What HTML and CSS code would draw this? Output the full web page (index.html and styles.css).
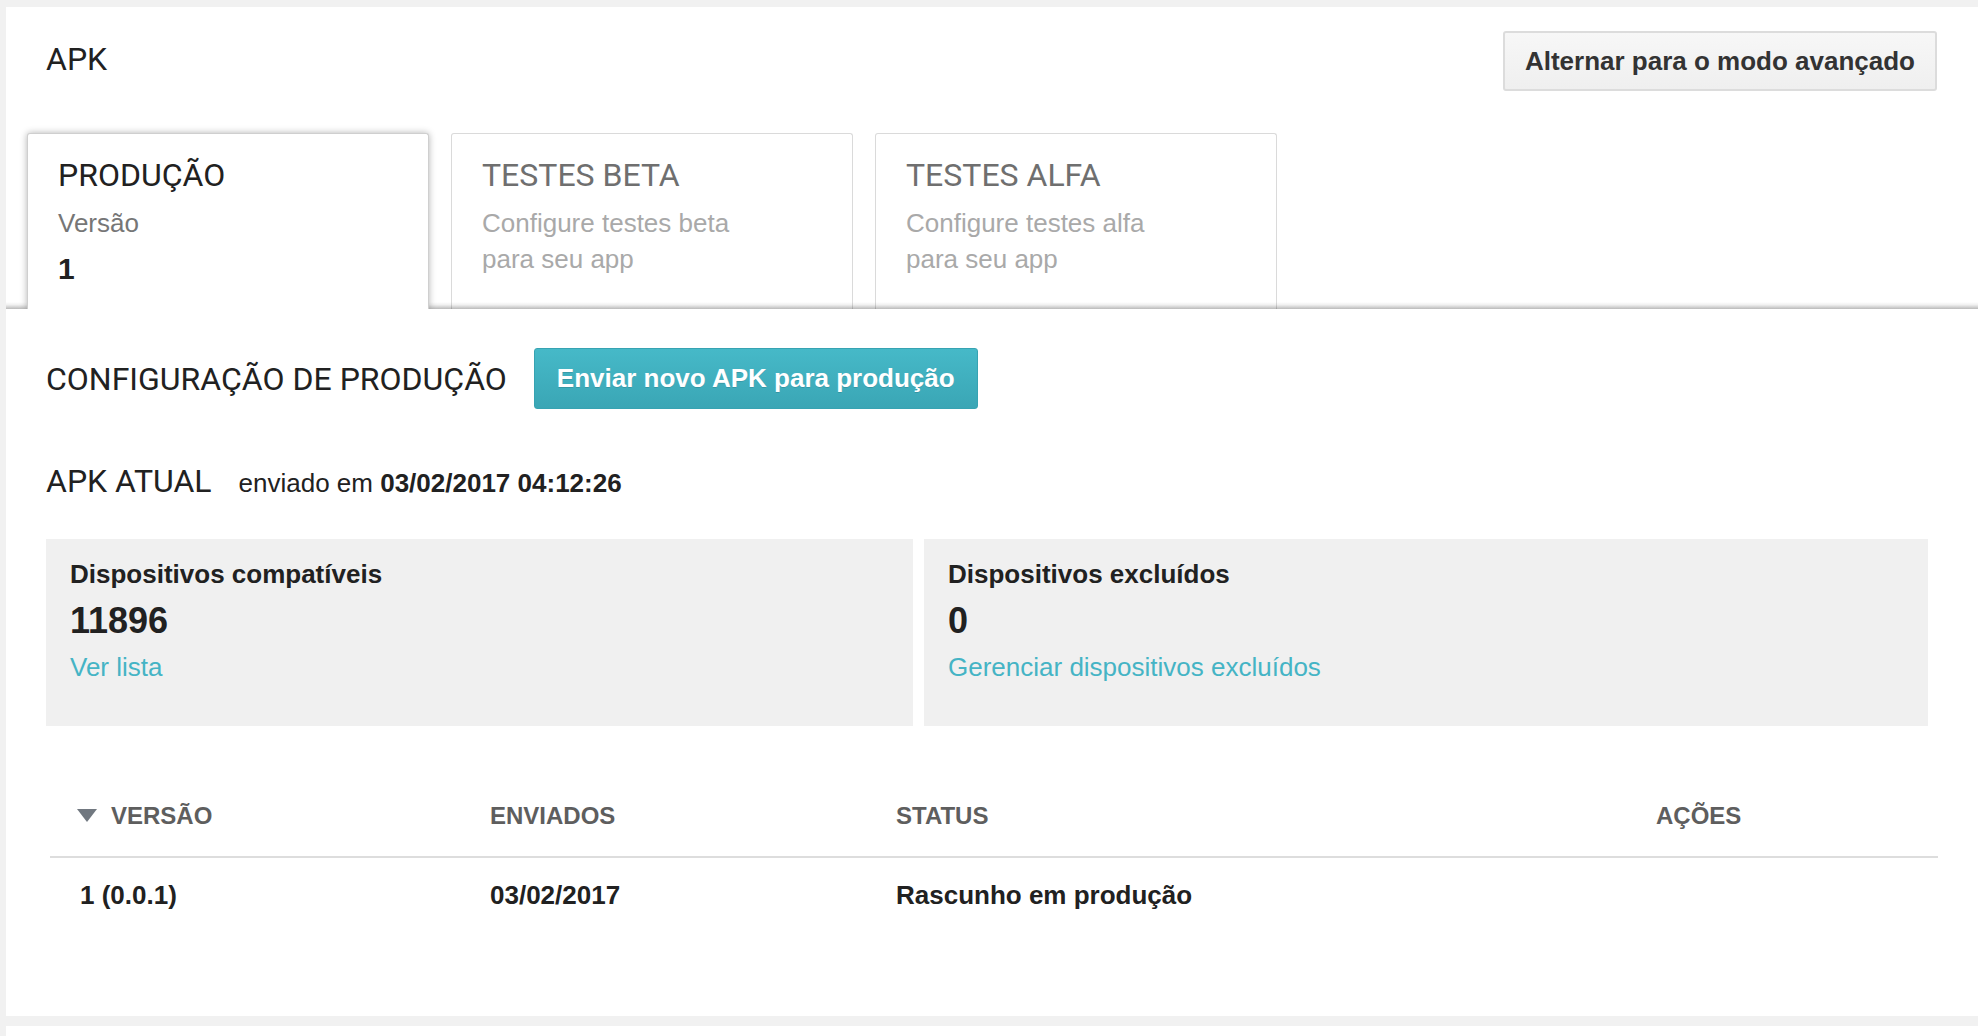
FILE: index.html
```html
<!DOCTYPE html>
<html lang="pt-BR">
<head>
<meta charset="utf-8">
<title>APK</title>
<link rel="stylesheet" href="styles.css">
</head>
<body>
<div class="panel">
  <div class="page-header">
    <h1 class="page-title">APK</h1>
    <button class="btn btn-default">Alternar para o modo avançado</button>
  </div>

  <div class="tabs">
    <div class="tab tab-active">
      <div class="tab-title">PRODUÇÃO</div>
      <div class="tab-sub">Versão</div>
      <div class="tab-value">1</div>
    </div>
    <div class="tab">
      <div class="tab-title">TESTES BETA</div>
      <div class="tab-sub tab-sub-muted">Configure testes beta<br>para seu app</div>
    </div>
    <div class="tab">
      <div class="tab-title">TESTES ALFA</div>
      <div class="tab-sub tab-sub-muted">Configure testes alfa<br>para seu app</div>
    </div>
  </div>

  <div class="content">
    <div class="config-row">
      <h2 class="section-title">CONFIGURAÇÃO DE PRODUÇÃO</h2>
      <button class="btn btn-primary">Enviar novo APK para produção</button>
    </div>

    <div class="current-row">
      <h2 class="section-title">APK ATUAL</h2>
      <span class="current-meta">enviado em <b>03/02/2017 04:12:26</b></span>
    </div>

    <div class="cards">
      <div class="card">
        <div class="card-label">Dispositivos compatíveis</div>
        <div class="card-number">11896</div>
        <a class="card-link" href="#">Ver lista</a>
      </div>
      <div class="card">
        <div class="card-label">Dispositivos excluídos</div>
        <div class="card-number">0</div>
        <a class="card-link" href="#">Gerenciar dispositivos excluídos</a>
      </div>
    </div>

    <div class="table">
      <div class="th th-first"><span class="sort-arrow"></span>VERSÃO</div>
      <div class="th">ENVIADOS</div>
      <div class="th">STATUS</div>
      <div class="th">AÇÕES</div>
      <div class="td td-first">1 (0.0.1)</div>
      <div class="td">03/02/2017</div>
      <div class="td">Rascunho em produção</div>
      <div class="td"></div>
    </div>
  </div>
</div>
<div class="panel panel-next"></div>
</body>
</html>
```

FILE: styles.css
```css
* { box-sizing: border-box; }

html, body { margin: 0; }

body {
  background: #f1f1f1;
  padding: 7px 0 0 6px;
  font-family: "Liberation Sans", Arial, sans-serif;
  color: #212121;
  overflow: hidden;
}

.panel {
  background: #fff;
  padding-bottom: 82px;
}

.panel-next {
  margin-top: 10px;
  height: 10px;
  padding: 0;
}

/* header */
.page-header {
  display: flex;
  justify-content: space-between;
  align-items: flex-start;
  padding: 24px 41px 0 40px;
}

.page-title,
.section-title {
  margin: 0;
  font-family: Roboto, "Liberation Sans", sans-serif;
  font-weight: 400;
  font-size: 32px;
  line-height: 38px;
  color: #212121;
}

.page-title { margin-top: 9px; }

.btn {
  font-family: "Liberation Sans", Arial, sans-serif;
  font-weight: 700;
  font-size: 26px;
  border-radius: 3px;
  cursor: pointer;
  margin: 0;
}

.btn-default {
  height: 60px;
  padding: 0 20px;
  color: #333;
  background: linear-gradient(#f7f7f7, #efefef);
  border: 2px solid #dcdcdc;
}

.btn-primary {
  height: 61px;
  padding: 0 22px;
  color: #fff;
  background: linear-gradient(#46b9c8, #3aa6b5);
  border: 1px solid #37a3b2;
  text-shadow: 0 1px 0 rgba(0, 0, 0, 0.12);
}

/* tabs */
.tabs {
  position: relative;
  display: flex;
  gap: 22px;
  margin-top: 32px;
  padding: 10px 0 0 21px;
  overflow: hidden;
}

.tabs::after {
  content: "";
  position: absolute;
  left: 0;
  right: 0;
  bottom: 0;
  height: 7px;
  background: linear-gradient(rgba(0, 0, 0, 0), rgba(0, 0, 0, 0.06) 40%, rgba(0, 0, 0, 0.27));
  z-index: 1;
}

.tab {
  position: relative;
  width: 402px;
  height: 176px;
  padding: 22px 30px 0 30px;
  background: #fff;
  border: 1px solid #dadada;
  border-bottom: none;
  border-radius: 3px 3px 0 0;
}

.tab-active {
  z-index: 2;
  border-color: #cfcfcf;
  box-shadow: 0 0 7px rgba(0, 0, 0, 0.3);
}

.tab-title {
  font-family: Roboto, "Liberation Sans", sans-serif;
  font-size: 32px;
  line-height: 38px;
  color: #6f6f6f;
}

.tab-active .tab-title { color: #212121; }

.tab-sub {
  margin-top: 11px;
  font-size: 26px;
  line-height: 36px;
  color: #767676;
}

.tab-sub-muted { color: #a9a9a9; }

.tab-value {
  margin-top: 10px;
  font-size: 30px;
  line-height: 36px;
  font-weight: 700;
  color: #212121;
}

/* content */
.content {
  padding: 39px 40px 0 40px;
}

.config-row {
  display: flex;
  align-items: center;
  gap: 27px;
}

.current-row {
  display: flex;
  align-items: baseline;
  margin-top: 53px;
}

.current-meta {
  margin-left: 27px;
  font-size: 26px;
  color: #212121;
}

.current-meta b { font-weight: 700; }

.cards {
  display: grid;
  grid-template-columns: 867fr 1004fr;
  gap: 11px;
  margin: 39px 10px 0 0;
}

.card {
  background: #f0f0f0;
  padding: 19px 24px 43px 24px;
}

.card-label {
  font-size: 26px;
  line-height: 32px;
  font-weight: 700;
  color: #212121;
}

.card-number {
  margin-top: 10px;
  font-size: 36px;
  line-height: 42px;
  font-weight: 700;
  color: #212121;
}

.card-link {
  display: block;
  margin-top: 9px;
  font-size: 26px;
  line-height: 32px;
  color: #45b4c5;
  text-decoration: none;
}

/* table */
.table {
  display: grid;
  grid-template-columns: 413px 406px 760px 1fr;
  margin: 52px 0 0 4px;
}

.th {
  display: flex;
  align-items: center;
  padding: 23px 0 25px 27px;
  font-size: 24px;
  line-height: 30px;
  font-weight: 700;
  color: #5e5e5e;
  border-bottom: 2px solid #dddddd;
}

.sort-arrow {
  width: 0;
  height: 0;
  margin-right: 14px;
  border-left: 10px solid transparent;
  border-right: 10px solid transparent;
  border-top: 13px solid #717880;
  position: relative;
  top: -1px;
}

.td {
  padding: 22px 0 24px 27px;
  font-size: 26px;
  line-height: 30px;
  font-weight: 700;
  color: #212121;
}

.td-first { padding-left: 30px; }
```
